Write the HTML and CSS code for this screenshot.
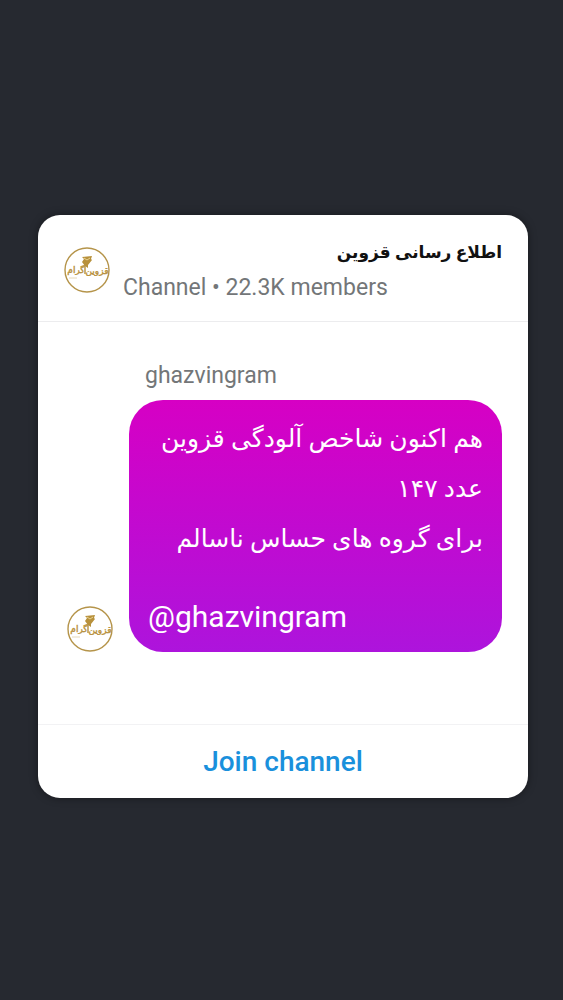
FILE: index.html
```html
<!DOCTYPE html>
<html lang="en">
<head>
<meta charset="UTF-8">
<meta name="viewport" content="width=device-width, initial-scale=1.0">
<title>ghazvingram</title>
<link rel="stylesheet" href="styles.css">
</head>
<body>

<!-- logo, used in the header and next to the message -->
<svg class="defs" width="0" height="0" aria-hidden="true">
  <symbol id="logo" viewBox="0 0 46 46">
    <circle cx="23" cy="23" r="22" fill="#fff" stroke="#b5944a" stroke-width="1.4"/>
    <path d="M18 10l10-1-1 3 1 1-4 5v3l-3-2-3-4 2-3z" fill="#b8913c"/>
    <path d="M20 11l3 2 3-2" fill="none" stroke="#ead493" stroke-width="1"/>
    <path d="M21 17v10" fill="none" stroke="#b8913c" stroke-width="1.4"/>
    <path d="M5 31h8" stroke="#e6d9b8" stroke-width="1"/>
    <text class="logo-text" x="33" y="27" text-anchor="middle">قزوین</text>
    <text class="logo-text" x="12" y="26" text-anchor="middle">گرام</text>
  </symbol>
</svg>

<main class="card">
  <header class="channel">
    <svg class="avatar" role="img" aria-label="ghazvingram"><use href="#logo"/></svg>
    <div class="channel-info">
      <h1 class="channel-title" dir="rtl" lang="fa">اطلاع رسانی قزوین</h1>
      <p class="channel-meta">Channel • 22.3K members</p>
    </div>
  </header>

  <section class="messages">
    <svg class="avatar" role="img" aria-label="ghazvingram"><use href="#logo"/></svg>
    <div class="message">
      <p class="sender">ghazvingram</p>
      <div class="bubble">
        <p dir="rtl" lang="fa">هم اکنون شاخص آلودگی قزوین<br>عدد ۱۴۷<br>برای گروه های حساس ناسالم</p>
        <p class="mention">@ghazvingram</p>
      </div>
    </div>
  </section>

  <button class="join-button" type="button">Join channel</button>
</main>

</body>
</html>
```

FILE: styles.css
```css
* {
  box-sizing: border-box;
}
body {
  margin: 0;
  padding: 215px 35px 40px 38px;
  background-color: #262930;
  font-family: Roboto, "DejaVu Sans", sans-serif;
}
h1, p {
  margin: 0;
}
.defs {
  position: absolute;
}
.logo-text {
  fill: #b8913c;
  stroke: #b8913c;
  stroke-width: 0.4px;
  font-family: "DejaVu Sans", sans-serif;
  font-size: 9px;
}
.card {
  max-width: 600px;
  margin: 0 auto;
  background-color: #fff;
  border-radius: 22px;
  box-shadow: 0 0 8px rgba(0, 0, 0, 0.4);
  overflow: hidden;
}
.avatar {
  flex: none;
  width: 46px;
  height: 46px;
}
.channel {
  display: flex;
  align-items: center;
  gap: 13px;
  padding: 19px 26px 15px;
  border-bottom: 1px solid #ececee;
}
.channel-info {
  flex: 1;
}
.channel-title {
  color: #111;
  font-size: 17px;
  font-weight: bold;
  line-height: 36px;
}
.channel-meta {
  color: #737678;
  font-size: 23px;
  line-height: 36px;
}
.messages {
  display: flex;
  align-items: flex-end;
  gap: 16px;
  padding: 36px 26px 72px 29px;
}
.message {
  flex: 1;
}
.sender {
  padding: 0 16px 6px;
  color: #737678;
  font-size: 23px;
  line-height: 36px;
}
.bubble {
  padding: 14px 19px 10px;
  border-radius: 34px;
  background: linear-gradient(#d600c4, #ad14dc);
  color: #fff;
  font-size: 25px;
  line-height: 50px;
}
.mention {
  padding-top: 28px;
  font-size: 30px;
}
.join-button {
  display: block;
  width: 100%;
  padding: 19px 18px 18px;
  border: none;
  border-top: 1px solid #f2f2f4;
  background: none;
  color: #1a90dc;
  font-family: inherit;
  font-size: 28px;
  font-weight: 500;
  line-height: 36px;
  cursor: pointer;
}
```
